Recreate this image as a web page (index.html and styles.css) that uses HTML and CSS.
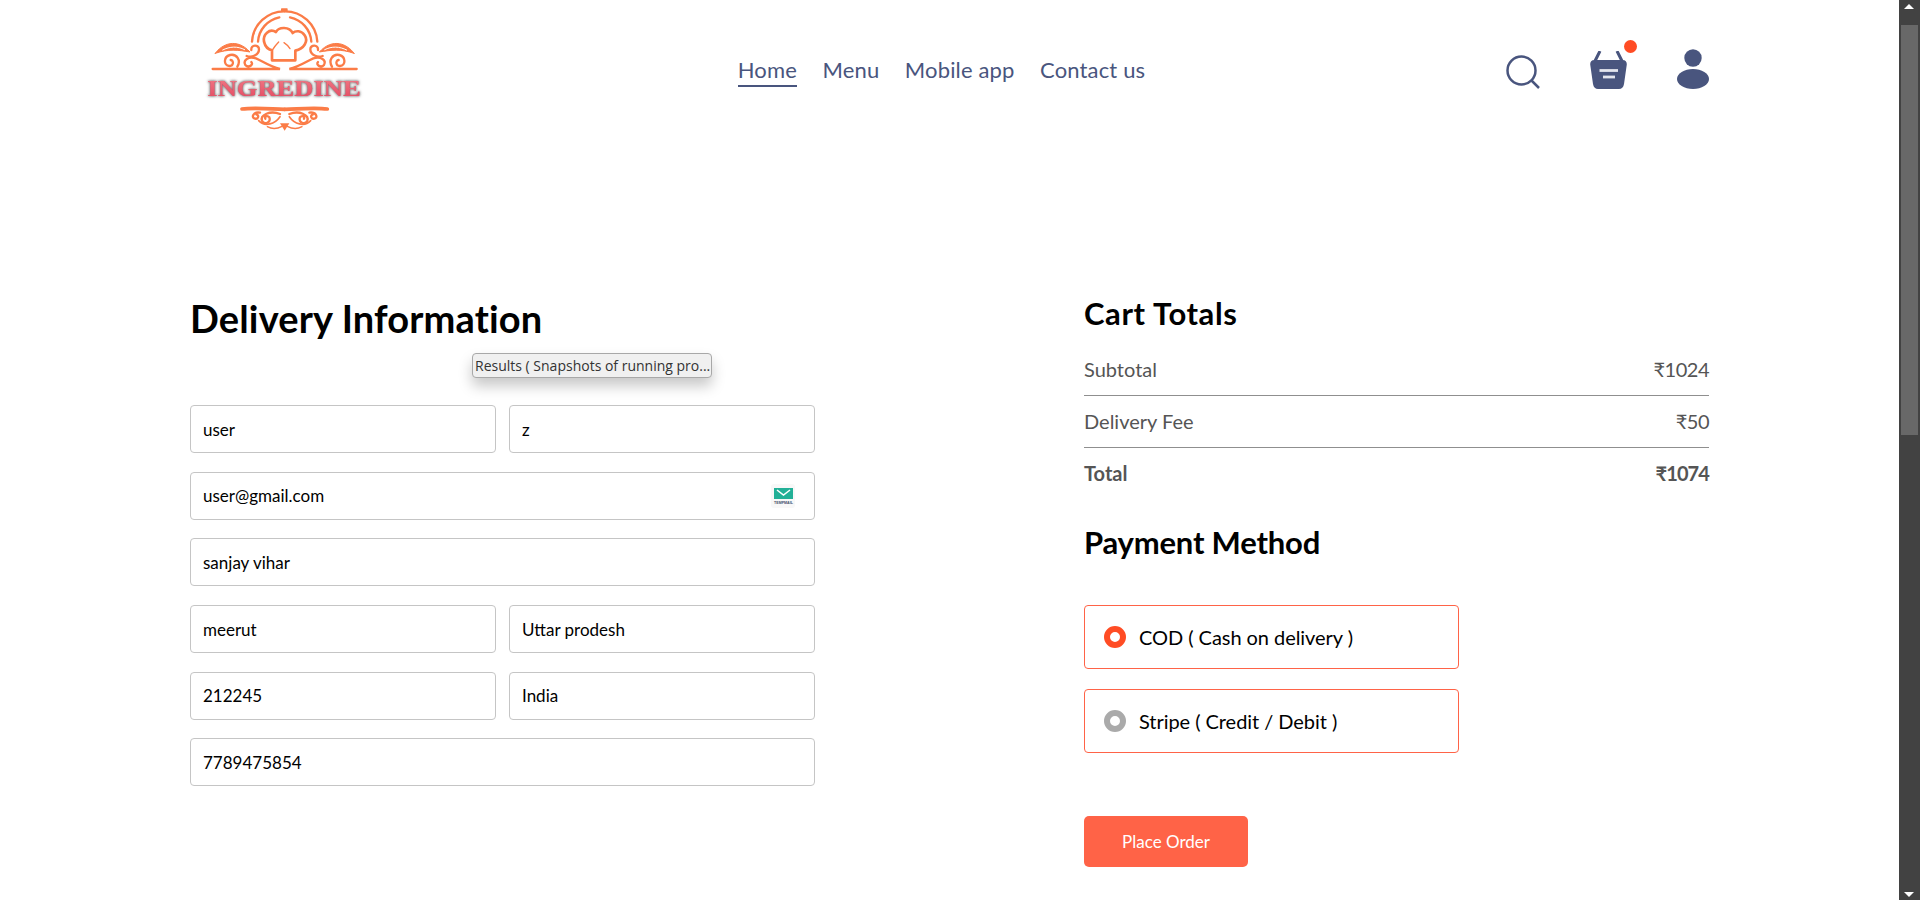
FILE: index.html
```html
<!DOCTYPE html>
<html lang="en">
<head>
<meta charset="utf-8">
<title>Ingredine - Place Order</title>
<link rel="stylesheet" href="styles.css">
</head>
<body>
<div class="window">
  <div class="page">
    <header class="navbar">
      <svg class="logo" viewBox="30 0 561 420" aria-label="Ingredine logo">
        <defs>
          <linearGradient id="logoText" x1="0" y1="0" x2="0" y2="1">
            <stop offset="0" stop-color="#f27c88"/>
            <stop offset="1" stop-color="#e2475f"/>
          </linearGradient>
          <g id="half" fill="none" stroke="#fb7c47" stroke-width="7" stroke-linecap="round">
            <path d="M216 125A97 97 0 0 1 314 34"/>
            <path d="M234 125A80 80 0 0 1 298 52"/>
            <path d="M106 160C125 132 170 112 210 156C175 150 145 146 106 160Z" fill="#fb7c47" stroke-width="3"/>
            <path d="M128 150C150 139 172 138 194 149" stroke="#fff" stroke-width="3"/>
            <path d="M200 168C215 174 237 165 237 148C237 133 212 133 214 150"/>
            <path d="M98 207H300C270 200 250 185 228 175C205 168 188 180 196 195C205 205 222 195 214 186"/>
            <path d="M172 200C184 180 170 161 150 165C130 170 130 197 148 198C160 199 163 182 152 180"/>
            <path d="M186 327C220 322 260 326 314 328" stroke-width="11"/>
            <path d="M240 338C220 335 212 352 225 356C235 358 238 345 230 344"/>
            <path d="M300 342C270 330 240 345 246 362C252 376 275 368 268 352C262 345 252 350 256 356"/>
            <path d="M236 362C255 382 285 372 300 350" stroke-width="5"/>
            <path d="M262 380C278 389 295 385 306 379" stroke-width="4"/>
          </g>
        </defs>
        <use href="#half"/>
        <use href="#half" transform="translate(628 0) scale(-1 1)"/>
        <rect x="303" y="25" width="20" height="11" rx="2" fill="#fb7c47"/>
        <path d="M276 181H346V152C372 146 386 124 374 106C364 90 346 92 338 99C328 79 296 80 288 96C268 84 248 104 252 125C256 142 266 149 276 151Z" fill="#fff" stroke="#fb7c47" stroke-width="8" stroke-linejoin="round"/>
        <path d="M312 128C320 133 326 140 330 146M276 152C282 142 290 132 296 126" fill="none" stroke="#fb7c47" stroke-width="4" stroke-linecap="round"/>
        <path d="M300 370H328L314 392Z" fill="#fb7c47"/>
        <text class="logo-name" x="82" y="288" textLength="460" lengthAdjust="spacingAndGlyphs" fill="url(#logoText)">INGREDINE</text>
      </svg>
      <nav class="menu">
        <a class="menu-link is-active">Home</a>
        <a class="menu-link">Menu</a>
        <a class="menu-link">Mobile app</a>
        <a class="menu-link">Contact us</a>
      </nav>
      <div class="nav-icons">
        <svg class="icon-search" viewBox="0 0 34 34" aria-label="Search">
          <circle cx="15.5" cy="15.5" r="14" fill="none" stroke="#49557e" stroke-width="2.5"/>
          <path d="M25.5 25.5L33 33" fill="none" stroke="#49557e" stroke-width="2.5"/>
        </svg>
        <div class="basket">
          <svg class="icon-basket" viewBox="0 0 37 38" aria-label="Basket">
            <path d="M10 0L5 10M27 0L32 10" fill="none" stroke="#49557e" stroke-width="3"/>
            <path d="M4.500 9H32.500C35.500 9 37 11 36.800 13.500L34 33C33.500 36.500 31.500 38 29 38H8C5.500 38 3.500 36.500 3 33L.2 13.500C0 11 1.500 9 4.500 9Z" fill="#49557e"/>
            <path d="M9.500 19.500H28" stroke="#e4e6ee" stroke-width="2.8"/>
            <path d="M13 26H25" stroke="#e4e6ee" stroke-width="2.8"/>
          </svg>
          <span class="dot"></span>
        </div>
        <svg class="icon-user" viewBox="0 0 32 40" aria-label="Profile">
          <circle cx="16" cy="9" r="8.700" fill="#49557e"/>
          <ellipse cx="16" cy="30" rx="16" ry="10" fill="#49557e"/>
        </svg>
      </div>
    </header>

    <main class="order">
      <section class="delivery">
        <h1 class="delivery-title">Delivery Information</h1>
        <form class="fields">
          <div class="field-row">
            <input class="field" value="user">
            <input class="field" value="z">
          </div>
          <div class="field-wrap">
            <input class="field" value="user@gmail.com">
            <span class="tempmail">
              <svg class="tempmail-icon" viewBox="0 0 24 24" aria-label="Temp mail">
                <rect width="24" height="24" rx="3" fill="#f8f8f8"/>
                <rect x="3" y="4" width="19" height="11" fill="#22b097"/>
                <path d="M6 6L12.500 11L19 6" fill="none" stroke="#fff" stroke-width="1.500"/>
                <text class="tempmail-name" x="12.500" y="20" text-anchor="middle">TEMPMAIL</text>
              </svg>
            </span>
          </div>
          <input class="field" value="sanjay vihar">
          <div class="field-row">
            <input class="field" value="meerut">
            <input class="field" value="Uttar prodesh">
          </div>
          <div class="field-row">
            <input class="field" value="212245">
            <input class="field" value="India">
          </div>
          <input class="field" value="7789475854">
        </form>
        <div class="tooltip">Results ( Snapshots of running pro...</div>
      </section>

      <section class="summary">
        <h2 class="summary-title">Cart Totals</h2>
        <div class="totals">
          <div class="total-row"><span>Subtotal</span><span class="amount">₹1024</span></div>
          <div class="rule"></div>
          <div class="total-row"><span>Delivery Fee</span><span class="amount">₹50</span></div>
          <div class="rule"></div>
          <div class="total-row total-grand"><span>Total</span><span class="amount">₹1074</span></div>
        </div>
        <h2 class="payment-title">Payment Method</h2>
        <div class="options">
          <label class="option"><span class="radio is-on"></span>COD ( Cash on delivery )</label>
          <label class="option"><span class="radio"></span>Stripe ( Credit / Debit )</label>
        </div>
        <button class="place" type="button">Place Order</button>
      </section>
    </main>
  </div>

  <div class="scrollbar">
    <span class="arrow-up"></span>
    <span class="thumb"></span>
    <span class="arrow-down"></span>
  </div>
</div>
</body>
</html>
```

FILE: styles.css
```css
* {
  box-sizing: border-box;
}

html,
body {
  margin: 0;
  height: 100%;
  overflow: hidden;
  background: #fff;
}

body {
  font-family: Lato, "Noto Sans", sans-serif;
  color: #000;
}

.window {
  display: flex;
  height: 900px;
}

.page {
  flex: 1;
  min-width: 0;
  padding: 0 190px;
}

.navbar {
  display: flex;
  align-items: center;
  justify-content: space-between;
  height: 140px;
}

.logo {
  width: 187px;
  height: 140px;
  flex: none;
}

.logo-name {
  font-family: "Liberation Serif", serif;
  font-weight: 700;
  font-size: 68px;
  stroke: #e2475f;
  stroke-width: 0.5px;
  filter: drop-shadow(0 0 3px #777) drop-shadow(0 0 4px #aaa);
}

.menu {
  display: flex;
  gap: 25.5px;
  margin-top: 2px;
}

.menu-link {
  color: #49557e;
  font-size: 22px;
  line-height: 28px;
  padding-bottom: 1px;
  border-bottom: 2px solid transparent;
  letter-spacing: 0.15px;
}

.menu-link.is-active {
  border-bottom-color: #49557e;
}

.nav-icons {
  display: flex;
  align-items: flex-end;
  gap: 50px;
  margin-top: -3px;
}

.icon-search {
  width: 34px;
  height: 34px;
  display: block;
}

.basket {
  position: relative;
  width: 37px;
  height: 38px;
}

.icon-basket {
  width: 37px;
  height: 38px;
  display: block;
}

.dot {
  position: absolute;
  top: -11px;
  right: -10px;
  width: 13px;
  height: 13px;
  border-radius: 50%;
  background: #ff4c24;
}

.icon-user {
  width: 32px;
  height: 40px;
  display: block;
}

.order {
  display: flex;
  justify-content: space-between;
  align-items: flex-start;
  padding-top: 148px;
}

.delivery {
  position: relative;
  width: 625px;
}

.delivery-title {
  margin: 0 0 57px;
  font-size: 38px;
  line-height: 60px;
  font-weight: 700;
  letter-spacing: 0.15px;
}

.fields {
  display: flex;
  flex-direction: column;
  gap: 18.7px;
}

.field-row {
  display: flex;
  gap: 13px;
}

.field-wrap {
  position: relative;
}

.field {
  display: block;
  width: 100%;
  min-width: 0;
  height: 48px;
  padding: 0 12px;
  border: 1px solid #c5c5c5;
  border-radius: 4px;
  outline: none;
  background: #fff;
  color: #000;
  font-family: inherit;
  font-size: 17px;
}

.tempmail {
  position: absolute;
  top: 12px;
  right: 20px;
  width: 24px;
  height: 24px;
}

.tempmail-icon {
  display: block;
  width: 24px;
  height: 24px;
}

.tempmail-name {
  font-family: "Liberation Sans", sans-serif;
  font-size: 3.6px;
  font-weight: 700;
  fill: #44506a;
}

.tooltip {
  position: absolute;
  top: 65px;
  left: 282px;
  width: 240px;
  height: 25px;
  padding: 0 2px;
  border: 1px solid #a8a8a8;
  border-radius: 4px;
  background: #f0f0f0;
  box-shadow: 0 8px 14px rgba(0, 0, 0, 0.22);
  color: #333;
  font-family: "Open Sans", sans-serif;
  font-size: 14px;
  line-height: 23px;
  white-space: nowrap;
  overflow: hidden;
}

.summary {
  width: 625px;
  margin-top: 5px;
}

.summary-title,
.payment-title {
  margin: 0;
  font-size: 31px;
  line-height: 40px;
  font-weight: 700;
}

.summary-title {
  letter-spacing: 0.6px;
}

.totals {
  margin-top: 23px;
  color: #555;
  font-size: 20px;
}

.total-row {
  display: flex;
  justify-content: space-between;
  height: 26px;
  line-height: 26px;
}

.amount {
  letter-spacing: -0.5px;
}

.total-grand {
  font-weight: 700;
}

.total-grand .amount {
  letter-spacing: -0.9px;
}

.rule {
  height: 1px;
  margin: 13px 0 12px;
  background: #8f8f8f;
}

.payment-title {
  margin-top: 36px;
  letter-spacing: -0.2px;
}

.options {
  display: flex;
  flex-direction: column;
  gap: 20px;
  margin-top: 43px;
}

.option {
  display: flex;
  align-items: center;
  gap: 13px;
  width: 375px;
  height: 64px;
  padding-left: 19px;
  border: 1px solid #ff6347;
  border-radius: 4px;
  font-size: 20px;
  letter-spacing: -0.05px;
}

.radio {
  width: 22px;
  height: 22px;
  border: 6px solid #aaa;
  border-radius: 50%;
  background: #fff;
}

.radio.is-on {
  border-color: #ff4c24;
}

.place {
  display: block;
  width: 164px;
  height: 51px;
  margin-top: 63px;
  border: 0;
  border-radius: 5px;
  background: #ff6347;
  color: #fff;
  font-family: inherit;
  font-size: 17px;
}

.scrollbar {
  position: relative;
  flex: none;
  width: 21px;
  background: #424242;
}

.thumb {
  position: absolute;
  top: 25px;
  left: 2px;
  width: 17px;
  height: 410px;
  background: #686868;
}

.arrow-up,
.arrow-down {
  position: absolute;
  left: 5px;
  width: 0;
  height: 0;
  border-left: 5px solid transparent;
  border-right: 5px solid transparent;
}

.arrow-up {
  top: 4px;
  border-bottom: 5px solid #fff;
}

.arrow-down {
  bottom: 3px;
  border-top: 5px solid #fff;
}
```
